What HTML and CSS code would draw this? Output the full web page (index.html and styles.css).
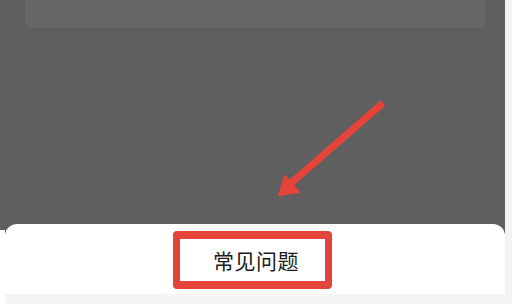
FILE: index.html
```html
<!DOCTYPE html>
<html lang="zh">
<head>
<meta charset="utf-8">
<title>常见问题</title>
<link rel="stylesheet" href="styles.css">
</head>
<body>
<div class="edge-left"></div>
<div class="screen">
  <div class="topcard"></div>
  <div class="stage">
    <svg class="arrow" width="500" height="196" viewBox="0 0 500 196">
      <line x1="378" y1="75" x2="285" y2="156" stroke="#e5443a" stroke-width="7" stroke-linecap="butt"/>
      <polygon points="274,167 280,148 294,164" fill="#e5443a" stroke="#e5443a" stroke-width="2" stroke-linejoin="round"/>
    </svg>
  </div>
  <div class="sheet">
    <div class="title-row">
      <div class="title-box"><span class="title">常见问题</span></div>
    </div>
    <div class="foot"></div>
  </div>
</div>
<div class="edge-right"></div>
</body>
</html>
```
FILE: styles.css
```css
html, body {
  margin: 0;
  padding: 0;
}
body {
  width: 512px;
  height: 304px;
  overflow: hidden;
  display: flex;
  background: #5f5f5f;
  font-family: "Noto Sans CJK SC", "Noto Sans", sans-serif;
}
.edge-left {
  width: 5px;
  background: linear-gradient(#5f5f5f 0, #5f5f5f 230px, #ffffff 230px);
}
.edge-right {
  width: 7px;
  background: #f3f3f3;
}
.screen {
  flex: 1;
  display: flex;
  flex-direction: column;
  background: #5f5f5f;
}
.topcard {
  height: 28px;
  margin: 0 20px;
  background: #666666;
  border-radius: 0 0 4px 4px;
  box-shadow: 0 0 3px rgba(0, 0, 0, 0.08);
}
.stage {
  height: 196px;
  display: flex;
}
.arrow {
  display: block;
}
.sheet {
  flex: 1;
  display: flex;
  flex-direction: column;
  background: #ffffff;
  border-radius: 12px 12px 0 0;
}
.title-row {
  display: flex;
  justify-content: center;
  padding-top: 7px;
  padding-right: 5px;
}
.title-box {
  box-sizing: border-box;
  width: 159px;
  height: 58px;
  border-style: solid;
  border-color: #e5443a;
  border-width: 8px 7px;
  border-radius: 4px;
  display: flex;
  align-items: center;
  justify-content: center;
  padding-left: 7px;
}
.title {
  font-size: 21px;
  color: #1c1c1c;
  letter-spacing: 0.5px;
}
.foot {
  margin-top: 5px;
  flex: 1;
  background: #f5f5f5;
}
```
